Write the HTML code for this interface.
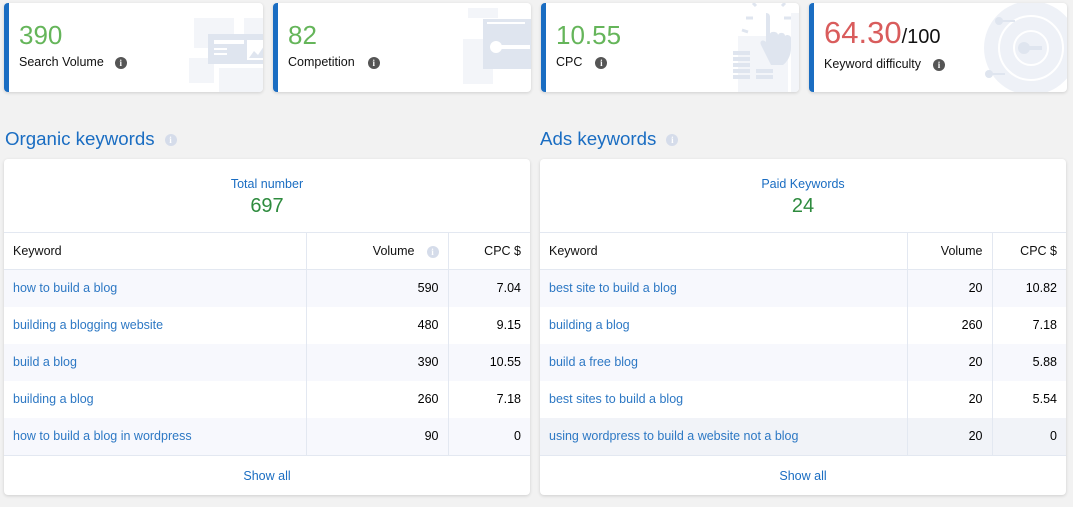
<!DOCTYPE html><html><head><style>
*{margin:0;padding:0;box-sizing:border-box}
body{width:1073px;height:507px;background:#f2f2f2;font-family:"Liberation Sans",Arial,sans-serif;position:relative;overflow:hidden}
.card{position:absolute;top:3px;height:89px;background:#fff;border-left:5px solid #1a6dc2;border-radius:4px;box-shadow:0 1px 3px rgba(0,0,0,.15);overflow:hidden}
.num{position:absolute;left:10px;top:17px;font-size:26px;color:#65b55a}
.lbl{position:absolute;left:10px;top:52px;font-size:12.5px;color:#111}
.i{display:inline-block;width:12px;height:12px;border-radius:50%;background:#555;color:#fff;font-size:9px;font-weight:bold;text-align:center;line-height:12px;font-family:"Liberation Serif",serif;vertical-align:middle;margin-left:13px}
.il{background:#d5dcea}
.deco{position:absolute}
h2{position:absolute;top:128px;font-size:18.7px;font-weight:normal;color:#1a6dc2}
.panel{position:absolute;top:159px;width:526px;height:336px;background:#fff;border-radius:4px;box-shadow:0 1px 3px rgba(0,0,0,.15);overflow:hidden}
.tt{position:absolute;top:18px;width:100%;text-align:center;font-size:12.5px;color:#1a6dc2}
.tn{position:absolute;top:36px;width:100%;text-align:center;font-size:20px;color:#2e8b3e}
table{position:absolute;top:73px;left:0;width:100%;border-collapse:collapse;font-size:12.5px}
td,th{height:37px;padding:0 9px;border-right:1px solid #e3e8f1}
th{font-weight:normal;color:#111;text-align:left;border-top:1px solid #e3e8f1;border-bottom:1px solid #e3e8f1}
td:last-child,th:last-child{border-right:none}
.r{text-align:right}
td a{color:#2d78c4;text-decoration:none}
tr.o td{background:#f7f8fd}
tr.h td{background:#f1f3f8}
.sa{position:absolute;bottom:0;height:40px;width:100%;border-top:1px solid #e3e8f1;text-align:center;line-height:40px;font-size:12.5px;color:#1a6dc2}
</style></head><body>

<div class="card" style="left:4px;width:259px">
<svg class="deco" style="left:180px;top:10px" width="80" height="80"><rect x="5" y="5" width="40" height="30" fill="#f3f5f9"/><rect x="55" y="5" width="25" height="20" fill="#f3f5f9"/><rect x="0" y="45" width="25" height="25" fill="#f3f5f9"/><rect x="30" y="55" width="50" height="25" fill="#f3f5f9"/><rect x="19" y="21" width="61" height="30" fill="#dfe5ef"/><rect x="25" y="27" width="30" height="4" fill="#fff"/><rect x="25" y="35" width="13" height="2" fill="#fff"/><rect x="25" y="40" width="13" height="2" fill="#fff"/><path d="M58 27h20v20h-20z" fill="#fff"/><path d="M60 45l5-7 4 4 6-9v12z" fill="#dfe5ef"/></svg>
<div class="num">390</div><div class="lbl">Search Volume<span class="i" style="margin-left:11px">i</span></div></div>

<div class="card" style="left:273px;width:258px">
<svg class="deco" style="left:180px;top:3px" width="80" height="86"><rect x="10" y="2" width="30" height="10" fill="#f3f5f9"/><rect x="5" y="33" width="30" height="45" fill="#f3f5f9"/><rect x="25" y="13" width="55" height="50" fill="#dfe5ef"/><rect x="29" y="16" width="38" height="2" fill="#fff"/><circle cx="38" cy="41" r="6" fill="#fff"/><rect x="40" y="39" width="32" height="4" fill="#fff"/></svg>
<div class="num">82</div><div class="lbl">Competition<span class="i">i</span></div></div>

<div class="card" style="left:541px;width:258px">
<svg class="deco" style="left:180px;top:0" width="80" height="89"><rect x="12" y="33" width="50" height="56" fill="#f3f5f9"/><rect x="65" y="10" width="15" height="79" fill="#f3f5f9"/><path d="M22 29l-6-2M30 3l-3-3M56 3l3-3M58 15l7 0M20 15l7 0" stroke="#dfe5ef" stroke-width="3" fill="none"/><path d="M40 10c3 0 4 2 4 4v17c0-3 8-3 8 1 1-3 7-3 7 1 1-2 6-1 6 2v10c0 8-4 14-8 17h-12l-10-20c-2-4 2-6 5-3v-25c0-2 0-4 0-4z" fill="#dfe5ef"/><g fill="#dfe5ef"><rect x="7" y="48" width="17" height="4"/><rect x="7" y="54" width="17" height="4"/><rect x="7" y="60" width="17" height="4"/><rect x="7" y="66" width="17" height="4"/><rect x="7" y="72" width="17" height="4"/><rect x="30" y="66" width="17" height="4"/><rect x="30" y="72" width="17" height="4"/></g></svg>
<div class="num">10.55</div><div class="lbl">CPC<span class="i">i</span></div></div>

<div class="card" style="left:809px;width:258px">
<svg class="deco" style="left:160px;top:0" width="98" height="89"><circle cx="57" cy="45" r="47" fill="#eef1f7"/><circle cx="57" cy="45" r="32" fill="none" stroke="#fff" stroke-width="2"/><circle cx="57" cy="45" r="17" fill="none" stroke="#fff" stroke-width="2"/><circle cx="50" cy="45" r="6" fill="#dfe5ef"/><rect x="50" y="43" width="18" height="4" fill="#dfe5ef"/><circle cx="25" cy="18" r="4" fill="#dfe5ef"/><rect x="25" y="17" width="16" height="2" fill="#dfe5ef"/><circle cx="15" cy="71" r="4" fill="#dfe5ef"/><rect x="15" y="70" width="16" height="2" fill="#dfe5ef"/></svg>
<div class="num" style="color:#d95c5c;font-size:31px;top:12px">64.30<span style="color:#111;font-size:20px">/100</span></div><div class="lbl" style="top:54px">Keyword difficulty<span class="i" style="margin-left:12px">i</span></div></div>

<h2 style="left:5px">Organic keywords<span class="i il" style="vertical-align:2px;margin-left:10px">i</span></h2>
<h2 style="left:540px">Ads keywords<span class="i il" style="vertical-align:2px;margin-left:10px">i</span></h2>

<div class="panel" style="left:4px">
<div class="tt">Total number</div><div class="tn">697</div>
<table><tr><th style="width:302px">Keyword</th><th class="r" style="width:142px">Volume<span class="i il" style="margin-left:12px">i</span></th><th class="r">CPC $</th></tr>
<tr class="o"><td><a>how to build a blog</a></td><td class="r">590</td><td class="r">7.04</td></tr>
<tr><td><a>building a blogging website</a></td><td class="r">480</td><td class="r">9.15</td></tr>
<tr class="o"><td><a>build a blog</a></td><td class="r">390</td><td class="r">10.55</td></tr>
<tr><td><a>building a blog</a></td><td class="r">260</td><td class="r">7.18</td></tr>
<tr class="o"><td><a>how to build a blog in wordpress</a></td><td class="r">90</td><td class="r">0</td></tr></table>
<div class="sa">Show all</div></div>

<div class="panel" style="left:540px">
<div class="tt">Paid Keywords</div><div class="tn">24</div>
<table><tr><th style="width:367px">Keyword</th><th class="r" style="width:85px">Volume</th><th class="r">CPC $</th></tr>
<tr class="o"><td><a>best site to build a blog</a></td><td class="r">20</td><td class="r">10.82</td></tr>
<tr><td><a>building a blog</a></td><td class="r">260</td><td class="r">7.18</td></tr>
<tr class="o"><td><a>build a free blog</a></td><td class="r">20</td><td class="r">5.88</td></tr>
<tr><td><a>best sites to build a blog</a></td><td class="r">20</td><td class="r">5.54</td></tr>
<tr class="h"><td><a>using wordpress to build a website not a blog</a></td><td class="r">20</td><td class="r">0</td></tr></table>
<div class="sa">Show all</div></div>
</body></html>
